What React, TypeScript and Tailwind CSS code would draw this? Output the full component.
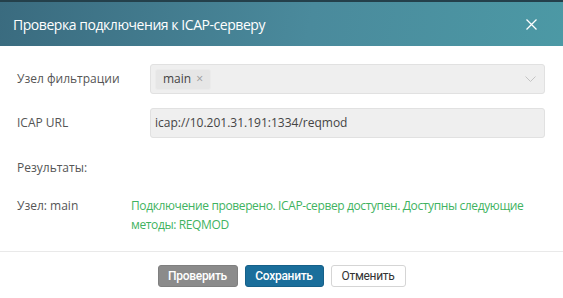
import React from "react";

export default function App() {
  return (
    <div className="w-[563px] h-[298px] bg-white overflow-hidden relative" style={{ fontFamily: '"Open Sans", "Noto Sans", sans-serif' }}>
      <div className="h-[2px] bg-[#24404b]" />
      <div className="h-[44px] flex items-center justify-between pl-[13px] pr-[26px] bg-[linear-gradient(100deg,#3a6b7f_0%,#4a8a9c_55%,#4c99a5_100%)]">
        <span className="text-white text-[14px] tracking-[-0.45px]">Проверка подключения к ICAP-серверу</span>
        <svg width="11" height="11" viewBox="0 0 11 11" className="mt-[1px]">
          <path d="M0.5 0.5 L10.5 10.5 M10.5 0.5 L0.5 10.5" stroke="#ffffff" strokeWidth="1.3" fill="none" />
        </svg>
      </div>

      <div className="pl-[17px] pr-[18px] pt-[18px] text-[12px] text-[#555555]">
        <div className="flex items-center h-[30px]">
          <div className="w-[133px]">Узел фильтрации</div>
          <div className="flex-1 h-[30px] bg-[#efefef] border border-[#e1e1e1] rounded-[3px] flex items-center justify-between pl-[4px] pr-[8px]">
            <div className="h-[21px] px-[7px] bg-[#e6e6e6] border border-[#ebebeb] rounded-[3px] flex items-center gap-[5px] text-[#444444]">
              <span>main</span>
              <span className="text-[#999999] text-[12px] leading-none">×</span>
            </div>
            <svg width="11" height="7" viewBox="0 0 11 7">
              <path d="M0.5 0.5 L5.5 5.5 L10.5 0.5" stroke="#c4c4c4" strokeWidth="1" fill="none" />
            </svg>
          </div>
        </div>

        <div className="flex items-center h-[30px] mt-[14px]">
          <div className="w-[133px]">ICAP URL</div>
          <div className="flex-1 h-[30px] bg-[#efefef] border border-[#e1e1e1] rounded-[3px] flex items-center pl-[4px] text-[#444444]">
            icap://10.201.31.191:1334/reqmod
          </div>
        </div>

        <div className="mt-[20px] h-[19px] leading-[19px]">Результаты:</div>

        <div className="flex mt-[19px] leading-[19px]">
          <div className="w-[114px]">Узел: main</div>
          <div className="flex-1 text-[#3fb35f] tracking-[-0.38px]">
            Подключение проверено. ICAP-сервер доступен. Доступны следующие методы: REQMOD
          </div>
        </div>
      </div>

      <div className="mt-[17px] border-t border-[#e9e9e9]" />

      <div className="flex justify-center gap-[7px] pt-[13px]" style={{ fontFamily: 'Roboto, "Noto Sans", sans-serif' }}>
        <button className="w-[80px] h-[22px] rounded-[3px] bg-[#8b8b8b] border border-[#7f7f7f] text-white text-[12px] font-medium tracking-[-0.3px]">Проверить</button>
        <button className="w-[79px] h-[22px] rounded-[3px] bg-[#1a6e9b] border border-[#166089] text-white text-[12px] font-medium tracking-[-0.3px]">Сохранить</button>
        <button className="w-[75px] h-[22px] rounded-[3px] bg-white border border-[#d5d5d5] text-[#333333] text-[12px] tracking-[-0.3px]">Отменить</button>
      </div>
    </div>
  );
}
